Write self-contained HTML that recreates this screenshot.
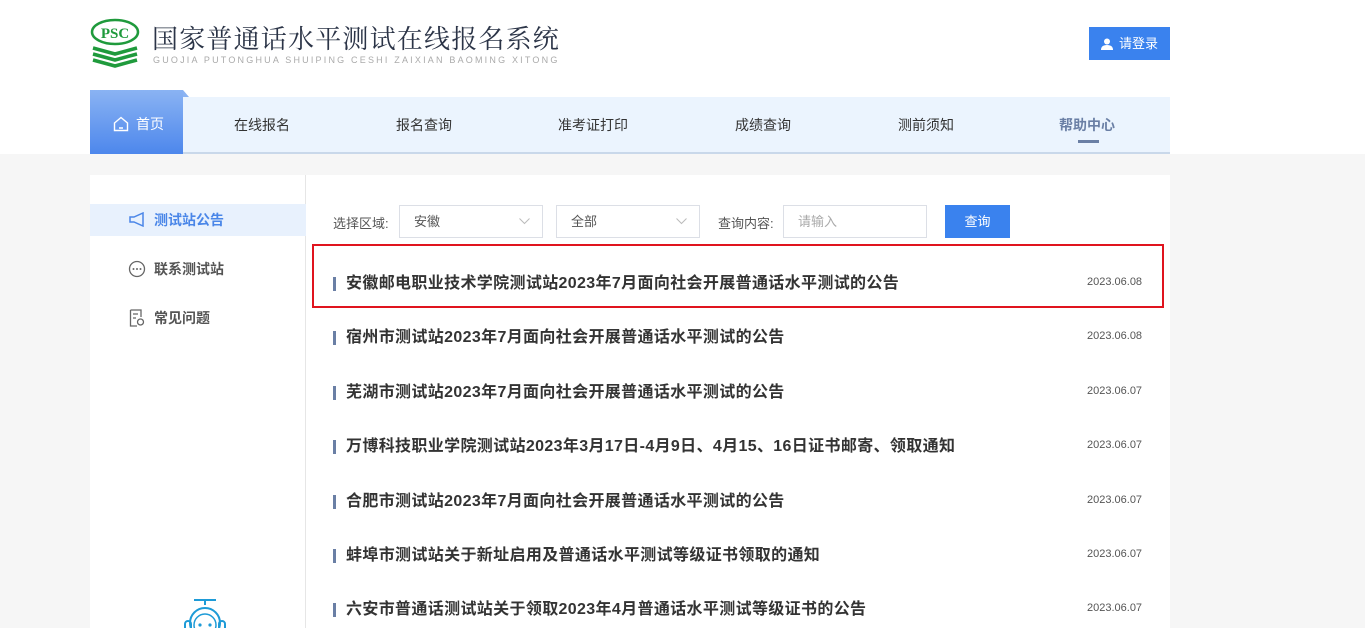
<!DOCTYPE html>
<html><head><meta charset="utf-8"><style>
*{margin:0;padding:0;box-sizing:border-box}
html,body{width:1365px;height:628px;overflow:hidden}
body{background:#f6f6f6;font-family:"Liberation Sans","Noto Sans CJK SC",sans-serif;position:relative}
.top{position:absolute;left:0;top:0;width:1365px;height:154px;background:#fff}
.abs{position:absolute}
.nav{position:absolute;left:90px;top:97px;width:1080px;height:57px;background:#ebf4fe;border-bottom:2px solid #c9d8ea}
.nav span{position:absolute;top:18px;font-size:14px;color:#333}
.home{position:absolute;left:90px;top:90px;width:93px;height:64px;background:linear-gradient(#8ab3f3,#4d87ec)}
.panel{position:absolute;left:90px;top:175px;width:1080px;height:453px;background:#fff;overflow:hidden}
.side{position:absolute;left:0;top:0;width:216px;height:460px;border-right:1px solid #e6e6e6}
.si{position:absolute;left:0;width:216px;height:32px;font-size:14px;font-weight:bold;color:#555;padding-left:64px;line-height:32px}
.row{position:absolute;left:243px;font-size:16px;font-weight:bold;color:#333;letter-spacing:0.35px;line-height:20px}
.row:before{content:"";position:absolute;left:0;top:3px;width:3px;height:14px;background:#6a7fa5}
.row b{padding-left:13px;font-weight:bold}
.date{position:absolute;left:997px;font-size:11px;color:#555}
.sel{position:absolute;top:30px;height:33px;border:1px solid #dcdfe6;font-size:13px;color:#555;line-height:31px;padding-left:14px}
.sel svg{position:absolute;right:12px;top:12px}
</style></head><body>
<div class="top">
<svg class="abs" style="left:90px;top:18px" width="52" height="52" viewBox="0 0 52 52"><ellipse cx="25" cy="14" rx="23" ry="12" fill="none" stroke="#1f9a3c" stroke-width="2.5"/><text x="25" y="20" text-anchor="middle" font-family="Liberation Serif" font-weight="bold" font-size="15" fill="#1f9a3c">PSC</text><path d="M3 30 L25 36 L47 30 M3 36 L25 42 L47 36 M3 42 L25 48 L47 42" stroke="#1f9a3c" stroke-width="3.5" fill="none"/></svg>
<div class="abs" style="left:152px;top:20px;font-size:26px;line-height:36px;color:#2b3447;letter-spacing:1.2px;font-family:'Noto Serif CJK SC',serif">国家普通话水平测试在线报名系统</div>
<div class="abs" style="left:153px;top:55px;font-size:9px;color:#aaa;letter-spacing:2.2px">GUOJIA PUTONGHUA SHUIPING CESHI ZAIXIAN BAOMING XITONG</div>
<div class="abs" style="left:1089px;top:27px;width:81px;height:33px;background:#3a82ee;color:#fff;font-size:13px;line-height:33px;padding-left:30px">请登录
<svg class="abs" style="left:12px;top:11px" width="12" height="12" viewBox="0 0 12 12"><circle cx="6" cy="3.5" r="3" fill="#fff"/><path d="M0 12 Q0 7 6 7 Q12 7 12 12Z" fill="#fff"/></svg></div>
</div>
<div class="nav">
<span style="left:144px">在线报名</span><span style="left:306px">报名查询</span><span style="left:468px">准考证打印</span><span style="left:645px">成绩查询</span><span style="left:808px">测前须知</span>
<span style="left:969px;color:#6a7fa5;font-weight:bold">帮助中心</span>
<div class="abs" style="left:988px;top:43px;width:21px;height:3px;background:#6a7fa5"></div>
</div>
<div class="home"><div class="abs" style="right:-6px;top:0;width:0;height:0;border-left:6px solid #8ab3f3;border-top:7px solid transparent"></div>
<svg class="abs" style="left:23px;top:26px" width="16" height="16" viewBox="0 0 16 16"><path d="M1.5 7 L8 1.5 L14.5 7 V14.5 H1.5Z M6 12 H10" fill="none" stroke="#fff" stroke-width="1.4"/></svg>
<span class="abs" style="left:46px;top:24px;color:#fff;font-size:14px">首页</span></div>
<div class="panel">
<div class="side">
<div class="si" style="top:29px;background:#e8f1fd;color:#4a86e8">测试站公告</div>
<svg class="abs" style="left:38px;top:37px" width="17" height="15" viewBox="0 0 17 15"><path d="M2 5 H6 L15 1 V14 L6 10 H2Z" fill="none" stroke="#4a86e8" stroke-width="1.5"/></svg>
<div class="si" style="top:78px">联系测试站</div>
<svg class="abs" style="left:38px;top:85px" width="18" height="18" viewBox="0 0 18 18"><circle cx="9" cy="9" r="7.5" fill="none" stroke="#666" stroke-width="1.3"/><circle cx="5.5" cy="9" r="1" fill="#666"/><circle cx="9" cy="9" r="1" fill="#666"/><circle cx="12.5" cy="9" r="1" fill="#666"/></svg>
<div class="si" style="top:127px">常见问题</div>
<svg class="abs" style="left:39px;top:134px" width="16" height="18" viewBox="0 0 16 18"><path d="M1.5 1 H12 V8 M1.5 1 V17 H8 M4 5 H9 M4 9 H7" fill="none" stroke="#666" stroke-width="1.3"/><circle cx="11.5" cy="13" r="3" fill="none" stroke="#666" stroke-width="1.3"/></svg>
<svg class="abs" style="left:92px;top:422px" width="48" height="40" viewBox="0 0 48 40"><path d="M12 3 H34 M23 3 V8" stroke="#1e9bd7" stroke-width="2"/><circle cx="23" cy="26" r="15" fill="none" stroke="#1e9bd7" stroke-width="2"/><circle cx="23" cy="28" r="11" fill="none" stroke="#1e9bd7" stroke-width="1.5"/><rect x="3" y="24" width="6" height="10" rx="3" fill="none" stroke="#1e9bd7" stroke-width="2"/><rect x="37" y="24" width="6" height="10" rx="3" fill="none" stroke="#1e9bd7" stroke-width="2"/><circle cx="18" cy="28" r="1.6" fill="#1e9bd7"/><circle cx="28" cy="28" r="1.6" fill="#1e9bd7"/></svg>
</div>
<div class="abs" style="left:243px;top:38px;font-size:13px;color:#555">选择区域:</div>
<div class="sel" style="left:309px;width:144px">安徽<svg width="11" height="7" viewBox="0 0 11 7"><path d="M0.5 0.5 L5.5 5.5 L10.5 0.5" fill="none" stroke="#bbb"/></svg></div>
<div class="sel" style="left:466px;width:144px">全部<svg width="11" height="7" viewBox="0 0 11 7"><path d="M0.5 0.5 L5.5 5.5 L10.5 0.5" fill="none" stroke="#bbb"/></svg></div>
<div class="abs" style="left:628px;top:38px;font-size:13px;color:#555">查询内容:</div>
<div class="sel" style="left:693px;width:144px;color:#aaa">请输入</div>
<div class="abs" style="left:855px;top:30px;width:65px;height:33px;background:#3a82ee;color:#fff;font-size:13px;line-height:33px;text-align:center">查询</div>
<div class="abs" style="left:222px;top:69px;width:852px;height:64px;border:2px solid #e0141e"></div>
<div class="row" style="top:99px"><b>安徽邮电职业技术学院测试站2023年7月面向社会开展普通话水平测试的公告</b></div><div class="date" style="top:101px">2023.06.08</div>
<div class="row" style="top:153px"><b>宿州市测试站2023年7月面向社会开展普通话水平测试的公告</b></div><div class="date" style="top:155px">2023.06.08</div>
<div class="row" style="top:208px"><b>芜湖市测试站2023年7月面向社会开展普通话水平测试的公告</b></div><div class="date" style="top:210px">2023.06.07</div>
<div class="row" style="top:262px"><b>万博科技职业学院测试站2023年3月17日-4月9日、4月15、16日证书邮寄、领取通知</b></div><div class="date" style="top:264px">2023.06.07</div>
<div class="row" style="top:317px"><b>合肥市测试站2023年7月面向社会开展普通话水平测试的公告</b></div><div class="date" style="top:319px">2023.06.07</div>
<div class="row" style="top:371px"><b>蚌埠市测试站关于新址启用及普通话水平测试等级证书领取的通知</b></div><div class="date" style="top:373px">2023.06.07</div>
<div class="row" style="top:425px"><b>六安市普通话测试站关于领取2023年4月普通话水平测试等级证书的公告</b></div><div class="date" style="top:427px">2023.06.07</div>
</div>
</body></html>
